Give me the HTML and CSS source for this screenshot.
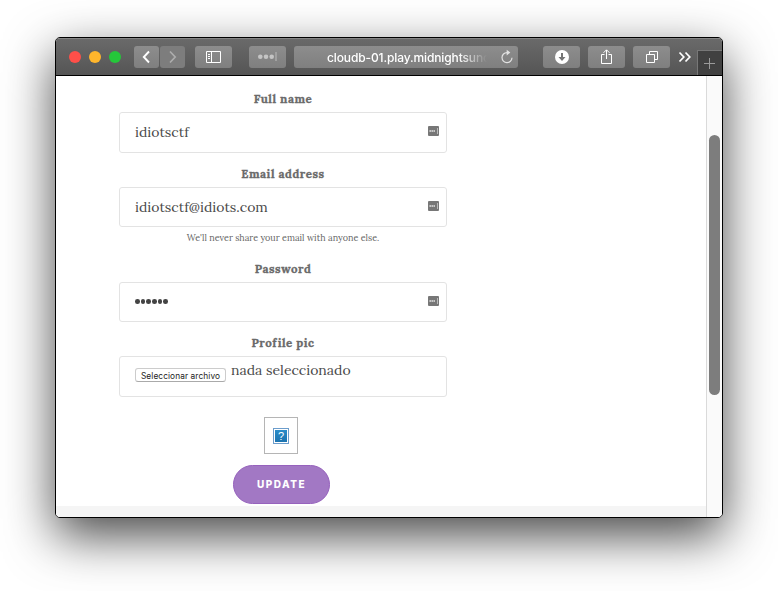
FILE: index.html
```html
<!DOCTYPE html>
<html lang="en">
<head>
<meta charset="utf-8">
<title>Profile</title>
<link rel="stylesheet" href="styles.css">
</head>
<body>
<div class="window">
  <header class="toolbar">
    <div class="lights"><i class="red"></i><i class="amber"></i><i class="green"></i></div>
    <div class="nav">
      <span class="tool small"><svg width="25" height="22"><path d="M15 5.500 L9.800 11 L15 16.500" stroke-width="1.900"/></svg></span>
      <span class="tool small off"><svg width="25" height="22"><path d="M10 5.500 L15.200 11 L10 16.500" stroke-width="1.700"/></svg></span>
    </div>
    <span class="tool sidebar"><svg width="37" height="22"><path d="M11.500 5.500H25.500V16.500H11.500ZM16.500 5.500V16.500M13 8.500H15M13 10.500H15M13 12.500H15"/></svg></span>
    <span class="tool dots"><svg width="37" height="22"><g fill="#c4c4c4" stroke="none"><circle cx="11.300" cy="10.700" r="2.300"/><circle cx="17" cy="10.700" r="2.300"/><circle cx="22.700" cy="10.700" r="2.300"/></g><path d="M27 6V15" stroke="#aaa" stroke-width="1.500"/></svg></span>
    <div class="address">
      <span class="url">cloudb-01.play.midnightsund</span>
      <svg class="reload" width="14" height="16"><path d="M8.500 3.600H7A5 5 0 1 0 12 8.800" stroke="#e2e2e2" stroke-width="1.200"/><path d="M6.700 .8L10.300 3.600L6.700 6.400Z" fill="#e2e2e2" stroke="none"/></svg>
    </div>
    <span class="tool download"><svg width="37" height="22"><circle cx="19" cy="11" r="7" fill="#fff" stroke="none"/><path d="M19 7V13" stroke="#747474" stroke-width="2"/><path d="M15.500 11H22.500L19 15Z" fill="#747474" stroke="none"/></svg></span>
    <span class="tool share"><svg width="37" height="22"><path d="M16.500 8.500H13.500V17.500H23.500V8.500H20.500M18.500 13V4M15.500 6.800L18.500 3.800L21.500 6.800"/></svg></span>
    <span class="tool tabs"><svg width="37" height="22"><path d="M13.500 8.500H21.500V16.500H13.500ZM16.500 8V5.500H24.500V13.500H22"/></svg></span>
    <svg class="more" width="14" height="12"><path d="M1.500 1.500L5.800 6L1.500 10.500M7.500 1.500L11.800 6L7.500 10.500" stroke-width="1.700"/></svg>
    <span class="newtab"><svg width="24" height="24"><path d="M6 12.500H17M11.500 7V18" stroke="#9b9b9b"/></svg></span>
  </header>
  <div class="viewport">
    <main class="page">
      <form class="form">
        <div class="label">Full name</div>
        <div class="field tall"><span>idiotsctf</span><svg class="key" width="11" height="10"><rect width="11" height="10" rx="1" fill="#777" stroke="none"/><path d="M1.500 5H7.500" stroke="#eee" stroke-width="1.300" stroke-dasharray="1.400 .6"/><path d="M9.500 2V8" stroke="#bbb"/></svg></div>
        <div class="label">Email address</div>
        <div class="field"><span>idiotsctf@idiots.com</span><svg class="key" width="11" height="10"><rect width="11" height="10" rx="1" fill="#777" stroke="none"/><path d="M1.500 5H7.500" stroke="#eee" stroke-width="1.300" stroke-dasharray="1.400 .6"/><path d="M9.500 2V8" stroke="#bbb"/></svg></div>
        <div class="help">We'll never share your email with anyone else.</div>
        <div class="label password">Password</div>
        <div class="field"><span class="mask"><i></i><i></i><i></i><i></i><i></i><i></i></span><svg class="key" width="11" height="10"><rect width="11" height="10" rx="1" fill="#777" stroke="none"/><path d="M1.500 5H7.500" stroke="#eee" stroke-width="1.300" stroke-dasharray="1.400 .6"/><path d="M9.500 2V8" stroke="#bbb"/></svg></div>
        <div class="label">Profile pic</div>
        <div class="field tall file"><span class="choose">Seleccionar archivo</span><span class="chosen">nada seleccionado</span></div>
        <div class="avatar"><span>?</span></div>
        <div class="update">UPDATE</div>
      </form>
      <div class="footer"></div>
    </main>
    <div class="track"><div class="thumb"></div></div>
  </div>
</div>
</body>
</html>
```
FILE: styles.css
```css
* { box-sizing: border-box; }
body { margin: 0; height: 591px; padding: 37px 55px; background: #fff; overflow: hidden; font-family: Lora, "Liberation Serif", serif; }
svg { display: block; fill: none; stroke: #fff; flex: none; }
.window { width: 668px; height: 481px; border: 1px solid #000; border-radius: 5px; overflow: hidden; background: #fff; box-shadow: 0 18px 50px rgba(0,0,0,.72); }
.toolbar { display: flex; height: 38px; padding: 8px 0 0 13px; background: linear-gradient(#6a6a6a, #555); border-bottom: 1px solid #000; box-shadow: inset 0 1px #858585; }
.lights { display: flex; gap: 8px; padding-top: 5px; width: 65px; }
.lights i { width: 12px; height: 12px; border-radius: 50%; }
.red { background: #ff4f49; }
.amber { background: #ffb62c; }
.green { background: #25c73a; }
.nav { display: flex; gap: 1px; }
.tool { width: 37px; height: 22px; border-radius: 3px; background: linear-gradient(#8d8d8d, #7f7f7f); flex: none; }
.small { width: 25px; }
.off svg { stroke: #adadad; }
.off { background: #7d7d7d; }
.sidebar { margin-left: 10px; }
.dots { margin-left: 17px; }
.address { display: flex; width: 224px; height: 22px; margin-left: 8px; padding-left: 33px; border-radius: 3px; background: linear-gradient(#8d8d8d, #7f7f7f); }
.url { width: 160px; white-space: nowrap; color: #fff; font: 500 12px/23px Inter, sans-serif; letter-spacing: -.12px; -webkit-mask-image: linear-gradient(90deg, #000 132px, transparent 160px); mask-image: linear-gradient(90deg, #000 132px, transparent 160px); }
.reload { margin: 3px 0 0 13px; }
.download { margin-left: 25px; }
.share, .tabs { margin-left: 8px; }
.more { margin: 5px 0 0 8px; }
.newtab { width: 25px; height: 25px; margin: 4px 0 0 5px; border: 1px solid #787878; border-width: 1px 0 0 1px; background: #414141; flex: none; }
.viewport { display: flex; height: 441px; }
.page { display: flex; flex-direction: column; width: 650px; }
.form { width: 328px; height: 430px; margin-left: 63px; padding-top: 12px; display: flex; flex-direction: column; }
.label { height: 24px; color: #6a6a6a; font-weight: 700; font-size: 11.500px; line-height: 22px; letter-spacing: .52px; -webkit-text-stroke: .3px #6a6a6a; text-align: center; }
.field { display: flex; justify-content: space-between; height: 40px; margin-bottom: 10px; padding: 0 8px 0 15px; border: 1px solid #e3e3e3; border-radius: 3px; color: #4a4a4a; font-size: 14px; line-height: 38px; flex: none; }
.tall { height: 41px; }
.key { margin-top: 13px; margin-right: -1px; }
.help { height: 22px; margin-top: -10px; color: #666; font-size: 9px; line-height: 22px; text-align: center; }
.password { margin-top: 9px; }
.mask { display: flex; gap: 1px; padding-top: 16px; }
.mask i { width: 4.700px; height: 4.700px; border-radius: 50%; background: #444; }
.file { justify-content: flex-start; gap: 5px; margin-bottom: 20px; }
.choose { width: 91px; height: 14px; margin-top: 11px; border: 1px solid #ccc; border-bottom-color: #aaa; border-radius: 3px; color: #222; font: 8.300px/15px Inter, sans-serif; text-align: center; letter-spacing: .1px; white-space: nowrap; }
.chosen { line-height: 27px; }
.avatar { display: flex; align-items: center; justify-content: center; width: 34px; height: 37px; margin-left: 145px; border: 1px solid #b5b5b5; flex: none; }
.avatar span { width: 16px; height: 16px; border: 1px solid #6c9dcc; background: linear-gradient(#2b8ecb, #1b72ae); box-shadow: inset 0 0 0 1px #fff; color: #fff; font: 11px/14px "Liberation Sans", sans-serif; text-align: center; }
.update { width: 97px; height: 39px; margin: 11px 0 0 114px; border: 1px solid #9662bd; border-radius: 20px; background: #a278c4; color: #fff; font: 800 10px/37px Inter, sans-serif; letter-spacing: 1.500px; text-align: center; flex: none; }
.footer { height: 11px; background: #f5f5f5; }
.track { width: 16px; border-left: 1px solid #dadada; background: #fafafa; padding: 59px 2px 0; }
.thumb { width: 11px; height: 260px; border-radius: 6px; background: #7d7d7d; }
```
